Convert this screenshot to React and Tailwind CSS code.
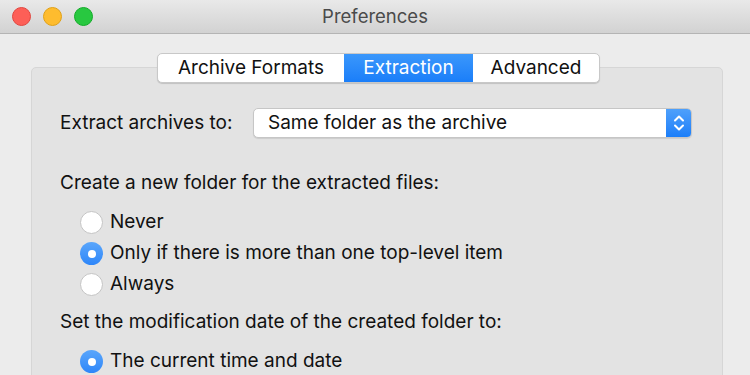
import React from 'react';

const Radio = ({ checked }) =>
  checked ? (
    <span className="w-[23px] h-[23px] rounded-full bg-gradient-to-b from-[#5aa6fb] to-[#2d86f9] flex items-center justify-center shrink-0">
      <span className="w-[8px] h-[8px] rounded-full bg-white" />
    </span>
  ) : (
    <span className="w-[23px] h-[23px] rounded-full bg-white border border-[#c4c4c4] shrink-0" />
  );

const Option = ({ label, checked }) => (
  <div className="flex items-center gap-[7px] h-[31px]">
    <Radio checked={checked} />
    <span>{label}</span>
  </div>
);

const App = () => {
  const tabs = [
    { name: 'Archive Formats', w: 'w-[186px]' },
    { name: 'Extraction', w: 'w-[129px]', active: true },
    { name: 'Advanced', w: 'w-[126px]' },
  ];

  return (
    <div
      className="w-[750px] h-[375px] overflow-hidden bg-[#ececec] text-[#111] text-[19px]"
      style={{ fontFamily: 'Inter, "Liberation Sans", sans-serif' }}
    >
      {/* title bar */}
      <div className="relative h-[34px] bg-gradient-to-b from-[#e9e9e9] to-[#d2d2d2] border-b border-[#b4b4b4] flex items-center justify-center">
        <div className="absolute left-[12px] top-[7px] flex gap-[12px]">
          <span className="w-[19px] h-[19px] rounded-full bg-[#fd5f57] border border-[#e2463f]" />
          <span className="w-[19px] h-[19px] rounded-full bg-[#febc2e] border border-[#e1a116]" />
          <span className="w-[19px] h-[19px] rounded-full bg-[#28c840] border border-[#12ac28]" />
        </div>
        <span className="text-[#4a4a4a] text-[18.5px]">Preferences</span>
      </div>

      <div className="relative pl-[31px] pr-[27px] pt-[33px]">
        {/* tabs */}
        <div className="absolute left-[157px] top-[19px] z-10 flex h-[30px] rounded-[5px] bg-white border border-[#c8c8c8] shadow-[0_1px_1px_rgba(0,0,0,0.15)] overflow-hidden">
          {tabs.map((t) => (
            <div
              key={t.name}
              className={`${t.w} flex items-center justify-center ${
                t.active ? 'bg-gradient-to-b from-[#3a97fb] to-[#1a7ef9] text-white' : ''
              }`}
            >
              {t.name}
            </div>
          ))}
        </div>

        {/* group box */}
        <div className="h-[320px] rounded-[5px] bg-[#e3e3e3] border border-[#d6d6d6] pl-[28px] pr-[30px] pt-[40px]">
          <div className="flex items-center h-[30px]">
            <span className="w-[193px]">Extract archives to:</span>
            <div className="flex-1 flex h-[30px] rounded-[5px] bg-white border border-[#c6c6c6] shadow-[0_1px_1px_rgba(0,0,0,0.1)] overflow-hidden">
              <span className="flex-1 flex items-center pl-[14px]">Same folder as the archive</span>
              <span className="w-[25px] bg-gradient-to-b from-[#4ea0fb] to-[#1a7ef9] flex items-center justify-center">
                <svg width="12" height="20" viewBox="0 0 12 20" fill="none" stroke="white" strokeWidth="2" strokeLinecap="round" strokeLinejoin="round">
                  <path d="M2 7.5 6 3.5 10 7.5" />
                  <path d="M2 12.5 6 16.5 10 12.5" />
                </svg>
              </span>
            </div>
          </div>

          <div className="mt-[30px] h-[30px] flex items-center">Create a new folder for the extracted files:</div>
          <div className="pl-[20px] mt-[9px]">
            <Option label="Never" />
            <Option label="Only if there is more than one top-level item" checked />
            <Option label="Always" />
          </div>

          <div className="mt-[7px] h-[30px] flex items-center">Set the modification date of the created folder to:</div>
          <div className="pl-[20px] mt-[9px]">
            <Option label="The current time and date" checked />
          </div>
        </div>
      </div>
    </div>
  );
};

export default App;
